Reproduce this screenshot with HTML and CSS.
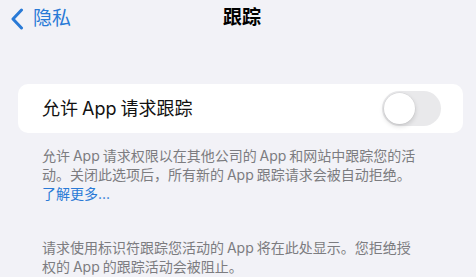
FILE: index.html
```html
<!DOCTYPE html>
<html lang="zh-CN">
<head>
<meta charset="utf-8">
<title>跟踪</title>
<link rel="stylesheet" href="styles.css">
</head>
<body>
<div class="screen">
  <header class="nav">
    <a class="back" href="#">
      <svg class="chev" width="14" height="22" viewBox="0 0 14 22" aria-hidden="true"><path d="M11.5 2 L3 11 L11.5 20" fill="none" stroke="currentColor" stroke-width="3" stroke-linecap="round" stroke-linejoin="round"/></svg>
      <span>隐私</span>
    </a>
    <h1 class="title">跟踪</h1>
    <span class="spacer"></span>
  </header>
  <main class="content">
    <section class="card">
      <span class="label">允许 App 请求跟踪</span>
      <span class="toggle"><span class="knob"></span></span>
    </section>
    <p class="footer first">允许 App 请求权限以在其他公司的 App 和网站中跟踪您的活<br>动。关闭此选项后，所有新的 App 跟踪请求会被自动拒绝。<br><a class="link" href="#">了解更多...</a></p>
    <p class="footer second">请求使用标识符跟踪您活动的 App 将在此处显示。您拒绝授<br>权的 App 的跟踪活动会被阻止。</p>
  </main>
</div>
</body>
</html>
```

FILE: styles.css
```css
html, body {
  margin: 0;
  padding: 0;
}
body {
  background: #f2f2f7;
  font-family: "Inter", "Noto Sans CJK SC", sans-serif;
  color: #000;
}
.screen {
  width: 476px;
  height: 277px;
  overflow: hidden;
  background: #f2f2f7;
}
.nav {
  height: 36px;
  display: grid;
  grid-template-columns: 1fr auto 1fr;
  align-items: center;
  padding: 0 10px;
}
.back {
  display: flex;
  align-items: center;
  gap: 9px;
  color: #2a7ad6;
  text-decoration: none;
  font-size: 19px;
  line-height: 22px;
  padding-top: 1px;
}
.chev {
  display: block;
}
.title {
  margin: 0 0 0 8px;
  font-size: 19px;
  font-weight: 700;
  line-height: 22px;
}
.content {
  padding: 0 13px 0 18px;
}
.card {
  margin-top: 48px;
  height: 49px;
  background: #fff;
  border-radius: 10px;
  display: flex;
  align-items: center;
  justify-content: space-between;
  padding: 0 22px 0 24px;
}
.label {
  font-size: 18px;
  line-height: 22px;
  color: #111;
  word-spacing: -1px;
}
.toggle {
  width: 59px;
  height: 35px;
  border-radius: 18px;
  background: #e9e9eb;
  display: flex;
  align-items: center;
  padding: 0 2px;
  box-sizing: border-box;
}
.knob {
  width: 31px;
  height: 31px;
  border-radius: 50%;
  background: #fff;
  box-shadow: 0 2px 5px rgba(0, 0, 0, 0.16), 0 0 0 0.5px rgba(0, 0, 0, 0.06);
}
.footer {
  margin: 13px 0 0;
  padding: 0 0 0 24px;
  font-size: 14px;
  line-height: 19px;
  color: #7c7c80;
  word-spacing: -1px;
}
.footer.second {
  margin-top: 35px;
}
.link {
  color: #2a7ad6;
  text-decoration: none;
}
```
